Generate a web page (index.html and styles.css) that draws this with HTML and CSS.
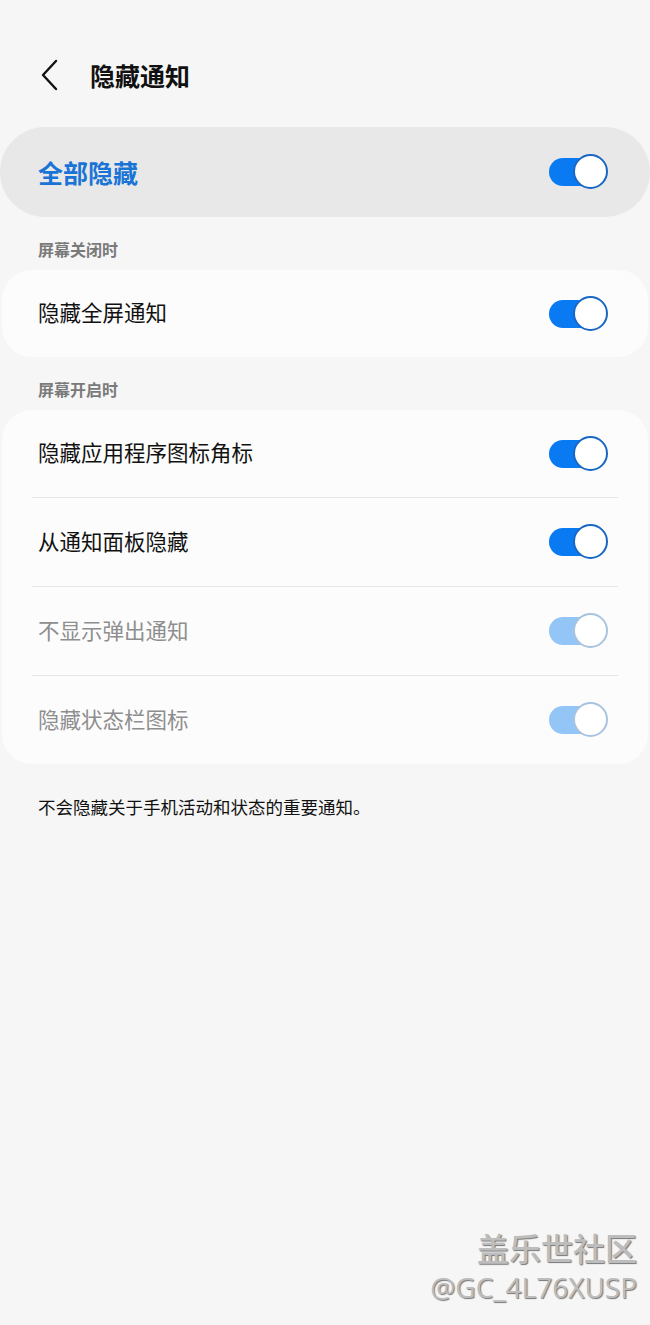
FILE: index.html
```html
<!DOCTYPE html>
<html>
<head>
<meta charset="utf-8">
<link rel="stylesheet" href="styles.css">
</head>
<body>

<div class="topbar">
  <svg class="back" width="20" height="32" viewBox="0 0 20 32">
    <path d="M16 2 L3 16 L16 30" fill="none" stroke="#111" stroke-width="2.4" stroke-linecap="round" stroke-linejoin="round"/>
  </svg>
  <h1 class="title">隐藏通知</h1>
</div>

<div class="master">
  <span class="master-label">全部隐藏</span>
  <span class="switch"><span class="knob"></span></span>
</div>

<div class="section">屏幕关闭时</div>
<div class="card">
  <div class="row">
    <span class="label">隐藏全屏通知</span>
    <span class="switch"><span class="knob"></span></span>
  </div>
</div>

<div class="section">屏幕开启时</div>
<div class="card">
  <div class="row">
    <span class="label">隐藏应用程序图标角标</span>
    <span class="switch"><span class="knob"></span></span>
  </div>
  <div class="row">
    <span class="label">从通知面板隐藏</span>
    <span class="switch"><span class="knob"></span></span>
  </div>
  <div class="row off">
    <span class="label">不显示弹出通知</span>
    <span class="switch"><span class="knob"></span></span>
  </div>
  <div class="row off">
    <span class="label">隐藏状态栏图标</span>
    <span class="switch"><span class="knob"></span></span>
  </div>
</div>

<p class="note">不会隐藏关于手机活动和状态的重要通知。</p>

<div class="watermark">
  <div class="wm-big">盖乐世社区</div>
  <div class="wm-small">@GC_4L76XUSP</div>
</div>

</body>
</html>
```

FILE: styles.css
```css
body {
  margin: 0;
  background: #f6f6f6;
  font-family: "Noto Sans CJK SC", "Noto Sans", sans-serif;
  color: #111;
  height: 1325px;
  position: relative;
  overflow: hidden;
}

.topbar {
  display: flex;
  align-items: center;
  padding-left: 40px;
  height: 72px;
  margin-top: 39px;
}

.back {
  margin-right: 30px;
}

.title {
  margin: 0;
  font-size: 25px;
  font-weight: 700;
}

.master {
  display: flex;
  align-items: center;
  justify-content: space-between;
  height: 90px;
  margin: 16px 0 0 0;
  padding: 0 43px 0 38px;
  background: #e8e8e8;
  border-radius: 45px;
}

.master-label {
  color: #1a74d6;
  font-size: 25px;
  font-weight: 700;
}

.section {
  font-size: 16px;
  font-weight: 700;
  color: #7a7a7a;
  padding: 21px 0 0 38px;
  height: 32px;
  line-height: 22px;
}

.card {
  background: #fcfcfc;
  border-radius: 30px;
  margin: 0 2px;
  padding: 0 30px;
}

.row {
  display: flex;
  align-items: center;
  justify-content: space-between;
  height: 88px;
  padding: 0 11px 0 6px;
  border-top: 1px solid #e6e6e6;
}

.row:first-child {
  border-top: none;
  height: 87px;
}

.label {
  font-size: 21.5px;
  line-height: 26px;
  padding-bottom: 3px;
}

.row.off .label {
  color: #8e8e8e;
}

.switch {
  position: relative;
  display: inline-block;
  width: 58px;
  height: 28px;
  background: #0a7af2;
  border-radius: 14px;
}

.knob {
  position: absolute;
  right: -1px;
  top: -4px;
  width: 31px;
  height: 31px;
  border: 2px solid #1967c4;
  border-radius: 50%;
  background: #fff;
}

.row.off .switch {
  background: #93c5f7;
}

.row.off .knob {
  border-color: #a8c3df;
}

.note {
  margin: 30px 0 0 38px;
  font-size: 17.5px;
  color: #111;
}

.watermark {
  position: absolute;
  right: 13px;
  bottom: 18px;
  text-align: right;
  color: #bdbdbd;
  text-shadow: 1px 1px 1px #777;
}

.wm-big {
  font-size: 32px;
  font-weight: 500;
  line-height: 40px;
}

.wm-small {
  font-family: "Open Sans", "Noto Sans", sans-serif;
  font-size: 28px;
  line-height: 40px;
}
```
